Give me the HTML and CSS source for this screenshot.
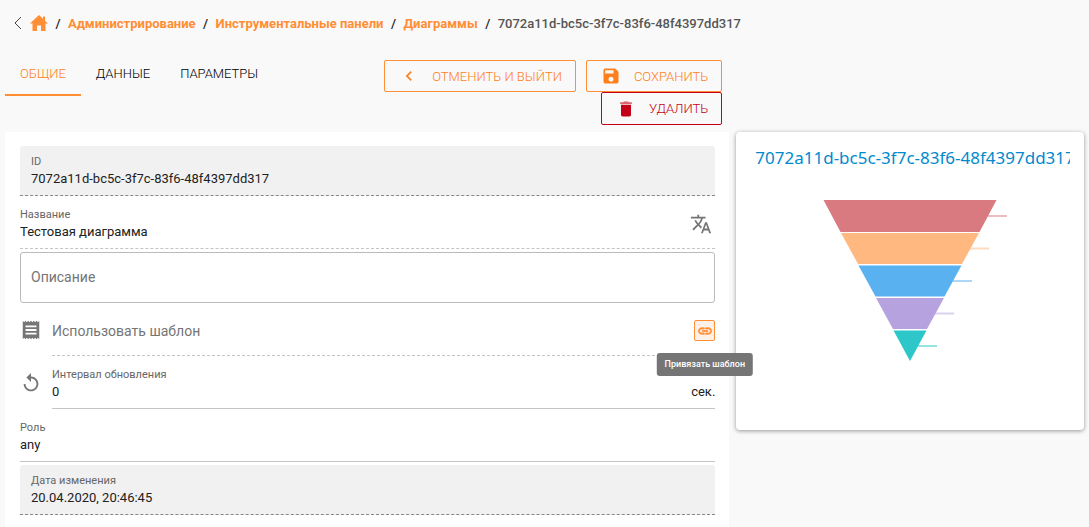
FILE: index.html
```html
<!DOCTYPE html>
<html lang="ru">
<head>
    <meta charset="UTF-8">
    <meta name="viewport" content="width=device-width, initial-scale=1.0">
    <title>Тестовая диаграмма</title>
    <link rel="stylesheet" href="styles.css">
</head>
<body>

<nav class="breadcrumbs">
    <a href="#" class="back" aria-label="Назад">
        <svg width="8" height="14" viewBox="0 0 8 14"><path d="M7 1L1 7l6 6" fill="none" stroke="currentColor"/></svg>
    </a>
    <a href="#" class="home" aria-label="Главная">
        <svg width="18" height="16" viewBox="0 0 18 16"><path d="M9 0L0 8.500h2.500V16h4.500v-5.500h4V16h4.500V8.500H18l-3-2.800V1.500h-2v2.300z" fill="currentColor"/></svg>
    </a>
    <span class="slash">/</span>
    <a href="#">Администрирование</a>
    <span class="slash">/</span>
    <a href="#">Инструментальные панели</a>
    <span class="slash">/</span>
    <a href="#">Диаграммы</a>
    <span class="slash">/</span>
    <span class="current">7072a11d-bc5c-3f7c-83f6-48f4397dd317</span>
</nav>

<main class="page">
    <div class="toolbar">
        <div class="tabs" role="tablist">
            <button class="tab active" role="tab" aria-selected="true">ОБЩИЕ</button>
            <button class="tab" role="tab">ДАННЫЕ</button>
            <button class="tab" role="tab">ПАРАМЕТРЫ</button>
        </div>
        <div class="actions">
            <button class="btn">
                <svg width="24" height="24" viewBox="0 0 24 24"><path d="M15.410 7.410L14 6l-6 6 6 6 1.410-1.410L10.830 12z"/></svg>
                ОТМЕНИТЬ И ВЫЙТИ
            </button>
            <button class="btn">
                <svg width="24" height="24" viewBox="0 0 24 24"><path d="M17 3H5a2 2 0 0 0-2 2v14a2 2 0 0 0 2 2h14c1.100 0 2-.9 2-2V7l-4-4zm-5 16c-1.660 0-3-1.340-3-3s1.340-3 3-3 3 1.340 3 3-1.340 3-3 3zm3-10H5V5h10v4z"/></svg>
                СОХРАНИТЬ
            </button>
            <button class="btn btn-delete">
                <svg width="24" height="24" viewBox="0 0 24 24"><path d="M6 19c0 1.100.9 2 2 2h8c1.100 0 2-.9 2-2V7H6v12z"/><path d="M19 4h-3.500l-1-1h-5l-1 1H5v2h14V4z" opacity=".6"/></svg>
                УДАЛИТЬ
            </button>
        </div>
    </div>

    <form class="form">
        <div class="field filled">
            <label for="id">ID</label>
            <input id="id" type="text" value="7072a11d-bc5c-3f7c-83f6-48f4397dd317" readonly>
        </div>

        <div class="field dashed with-icon">
            <div class="field-body">
                <label for="name">Название</label>
                <input id="name" type="text" value="Тестовая диаграмма">
            </div>
            <button type="button" class="translate" aria-label="Перевод">
                <svg width="24" height="24" viewBox="0 0 24 24"><path d="M12.870 15.070l-2.540-2.510.03-.03c1.740-1.940 2.980-4.170 3.710-6.530H17V4h-7V2H8v2H1v1.990h11.170C11.500 7.920 10.440 9.750 9 11.350 8.070 10.320 7.300 9.190 6.690 8h-2c.73 1.630 1.730 3.170 2.980 4.560l-5.090 5.020L4 19l5-5 3.110 3.110.76-2.040zM18.500 10h-2L12 22h2l1.120-3h4.750L21 22h2l-4.500-12zm-2.620 7l1.620-4.330L19.120 17h-3.240z"/></svg>
            </button>
        </div>

        <textarea class="description" rows="1" placeholder="Описание" aria-label="Описание"></textarea>

        <div class="icon-row">
            <svg class="row-icon" width="24" height="24" viewBox="0 0 24 24"><path d="M18 17H6v-2h12v2zm0-4H6v-2h12v2zm0-4H6V7h12v2zM3 22l1.500-1.500L6 22l1.500-1.500L9 22l1.500-1.500L12 22l1.500-1.500L15 22l1.500-1.500L18 22l1.500-1.500L21 22V2l-1.500 1.500L18 2l-1.500 1.500L15 2l-1.500 1.500L12 2l-1.500 1.500L9 2 7.500 3.500 6 2 4.500 3.500 3 2v20z"/></svg>
            <div class="field dashed template">
                <input type="text" placeholder="Использовать шаблон" aria-label="Использовать шаблон">
                <button type="button" class="link-btn" aria-describedby="link-tip">
                    <svg width="16" height="16" viewBox="0 0 24 24"><path d="M3.900 12c0-1.710 1.390-3.100 3.100-3.100h4V7H7c-2.760 0-5 2.240-5 5s2.240 5 5 5h4v-1.900H7c-1.710 0-3.100-1.390-3.100-3.100zM8 13h8v-2H8v2zm9-6h-4v1.900h4c1.710 0 3.100 1.390 3.100 3.100s-1.390 3.100-3.100 3.100h-4V17h4c2.760 0 5-2.240 5-5s-2.240-5-5-5z" stroke="currentColor"/></svg>
                    <span class="tooltip" id="link-tip" role="tooltip">Привязать шаблон</span>
                </button>
            </div>
        </div>

        <div class="icon-row">
            <svg class="row-icon" width="24" height="24" viewBox="0 0 24 24"><path d="M12 5V1L7 6l5 5V7c3.310 0 6 2.690 6 6s-2.690 6-6 6-6-2.690-6-6H4c0 4.420 3.580 8 8 8s8-3.580 8-8-3.580-8-8-8z"/></svg>
            <div class="field">
                <label for="interval">Интервал обновления</label>
                <div class="value-row">
                    <input id="interval" type="text" value="0">
                    <span class="unit">сек.</span>
                </div>
            </div>
        </div>

        <div class="field">
            <label for="role">Роль</label>
            <input id="role" type="text" value="any">
        </div>

        <div class="field filled date">
            <label for="changed">Дата изменения</label>
            <input id="changed" type="text" value="20.04.2020, 20:46:45" readonly>
        </div>
    </form>

    <section class="chart-card">
        <h2>7072a11d-bc5c-3f7c-83f6-48f4397dd317</h2>
        <svg class="funnel" width="200" height="162" viewBox="0 0 200 162">
            <g fill="none" stroke-width="2">
                <path d="M178 16h19" stroke="#ecbcc0"/>
                <path d="M160 48.500h19" stroke="#ffdbc0"/>
                <path d="M143 81h19" stroke="#acd7f7"/>
                <path d="M125 113.500h19" stroke="#dbd0ef"/>
                <path d="M108 146h19" stroke="#96e3e4"/>
            </g>
            <path d="M13.500 0h173L169.500 32h-139z" fill="#d87a80"/>
            <path d="M31 33h138l-17 31H48z" fill="#ffb980"/>
            <path d="M48.500 65.500h103L134.500 96.500h-69z" fill="#5ab1ef"/>
            <path d="M66 98h68l-17 31H83z" fill="#b6a2de"/>
            <path d="M83.500 130.500h33L100 161z" fill="#2ec7c9"/>
        </svg>
    </section>
</main>

</body>
</html>
```

FILE: styles.css
```css
* {
    box-sizing: border-box;
}

body {
    margin: 0;
    background: #f9f9f9;
    color: #212121;
    font-family: Roboto, "Liberation Sans", sans-serif;
    font-size: 13px;
}

button,
input,
textarea {
    font: inherit;
    color: inherit;
    margin: 0;
    padding: 0;
    border: 0;
    background: none;
    outline: none;
}

button {
    cursor: pointer;
}

svg {
    display: block;
    flex: none;
    fill: currentColor;
}

/* Breadcrumbs */
.breadcrumbs {
    display: flex;
    align-items: center;
    height: 46px;
    padding-left: 14px;
    font-weight: 700;
    white-space: nowrap;
}

.breadcrumbs a {
    color: #ff8e35;
    text-decoration: none;
}

.breadcrumbs .back {
    margin-right: 8px;
    color: #444;
}

.breadcrumbs .slash {
    width: 20px;
    text-align: center;
    font-weight: 500;
}

.breadcrumbs .current {
    color: #555;
    font-weight: 500;
}

/* Form on the left, chart preview on the right */
.page {
    display: grid;
    grid-template-columns: 25fr 12fr;
    column-gap: 7px;
    align-items: start;
    padding: 0 5px;
}

.toolbar {
    grid-column: 1;
    display: flex;
    align-items: flex-start;
    min-height: 86px;
    padding: 14px 7px 7px 0;
}

.tabs {
    display: flex;
    margin-top: -7px;
}

.tab {
    height: 43px;
    padding: 0 15px;
    border-bottom: 2px solid transparent;
    color: #000;
    font-weight: 300;
}

.tab.active {
    color: #ff7f1a;
    border-color: #ff8e35;
}

.actions {
    flex: 1;
    display: flex;
    flex-wrap: wrap;
    justify-content: flex-end;
    column-gap: 10px;
}

.btn {
    display: flex;
    align-items: center;
    gap: 13px;
    height: 32px;
    padding: 0 13px 0 14px;
    border: 1px solid #ff8e35;
    border-radius: 2px;
    color: #ff7f1a;
    font-weight: 300;
}

.btn svg {
    width: 20px;
    height: 20px;
}

.btn-delete {
    height: 33px;
    border-color: #c40018;
    color: #c40018;
}

/* Form */
.form {
    grid-column: 1;
    padding: 14px 14px 12px 15px;
    background: #fff;
}

.field {
    flex: 1;
    min-width: 0;
    height: 53px;
    padding-top: 11px;
    border-bottom: 1px solid #c4c4c4;
}

.field label {
    display: block;
    color: #666;
    font-size: 11px;
    line-height: 16px;
}

.field input {
    display: block;
    width: 100%;
    height: 16px;
}

.field.dashed {
    border-bottom-style: dashed;
}

.field.filled {
    height: 50px;
    padding: 8px 11px 0;
    border-bottom: 1px dashed #888;
    border-radius: 3px 3px 0 0;
    background: #f1f1f1;
}

.field.date {
    margin-top: 3px;
}

.with-icon {
    display: flex;
}

.field-body {
    flex: 1;
}

.translate {
    align-self: flex-start;
    margin: 6px 3px 0 0;
    color: #757575;
}

.translate svg {
    width: 22px;
    height: 22px;
}

.description {
    display: block;
    width: 100%;
    height: 51px;
    margin-top: 3px;
    padding: 14px 10px;
    border: 1px solid #bbb;
    border-radius: 3px;
    font-size: 14px;
    line-height: 20px;
    resize: none;
}

::placeholder {
    color: #757575;
    opacity: 1;
}

.icon-row {
    display: flex;
}

.row-icon {
    width: 22px;
    height: 22px;
    margin: 16px 10px 0 0;
    color: #757575;
}

.field.template {
    display: flex;
    align-items: center;
    padding: 3px 0 0;
}

.template input {
    flex: 1;
    font-size: 14px;
}

.link-btn {
    position: relative;
    display: grid;
    place-items: center;
    width: 21px;
    height: 21px;
    border: 1px solid #ff8e35;
    border-radius: 2px;
    background: #fff1e7;
    color: #ff8e35;
}

.tooltip {
    position: absolute;
    top: 32px;
    left: 50%;
    z-index: 1;
    padding: 0 8px;
    border-radius: 3px;
    background: #757575;
    color: #fff;
    font-size: 9px;
    font-weight: 500;
    line-height: 23px;
    white-space: nowrap;
    transform: translateX(-50%);
}

.value-row {
    display: flex;
    align-items: center;
}

/* Chart preview */
.chart-card {
    grid-column: 2;
    min-width: 0;
    height: 298px;
    padding: 14px 14px 0;
    border-radius: 4px;
    background: #fff;
    box-shadow: 0 1px 4px rgba(0, 0, 0, 0.4);
}

/* long titles are cut at the card edge */
.chart-card h2 {
    margin: 0 0 0 5px;
    overflow: hidden;
    color: #008acd;
    font-family: "Noto Sans", "Open Sans", sans-serif;
    font-size: 17px;
    font-weight: 400;
    line-height: 23px;
    white-space: nowrap;
}

.funnel {
    margin: 31px auto 0;
}
```
